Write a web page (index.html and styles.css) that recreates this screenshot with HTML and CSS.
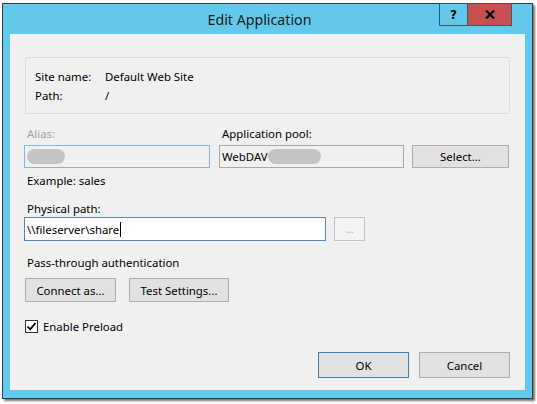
FILE: index.html
```html
<!DOCTYPE html>
<html>
<head>
<meta charset="utf-8">
<link rel="stylesheet" href="styles.css">
</head>
<body>
<div class="window">
  <div class="titlebar">
    <div class="title">Edit Application</div>
    <div class="controls">
      <div class="help">?</div>
      <div class="close">
        <svg width="10" height="9" viewBox="0 0 10 9"><path d="M1 0.5 L9 8.5 M9 0.5 L1 8.5" stroke="#000" stroke-width="2.2"/></svg>
      </div>
    </div>
  </div>
  <div class="client">
    <div class="sitebox">
      <div class="siterow"><span class="k">Site name:</span><span class="v">Default Web Site</span></div>
      <div class="siterow"><span class="k">Path:</span><span class="v">/</span></div>
    </div>

    <div class="row labels">
      <div class="lbl disabled alias-col">Alias:</div>
      <div class="lbl pool-col">Application pool:</div>
    </div>
    <div class="row inputs">
      <div class="input alias"><span class="blob b1"></span></div>
      <div class="input pool"><span class="txt">WebDAV</span><span class="blob b2"></span></div>
      <div class="btn select">Select...</div>
    </div>
    <div class="example">Example: sales</div>

    <div class="lbl phys-lbl">Physical path:</div>
    <div class="row inputs2">
      <div class="input phys"><span class="txt">\\fileserver\share</span><span class="caret"></span></div>
      <div class="btn dots">...</div>
    </div>

    <div class="lbl pass-lbl">Pass-through authentication</div>
    <div class="row btns">
      <div class="btn connect">Connect as...</div>
      <div class="btn test">Test Settings...</div>
    </div>

    <div class="row check">
      <span class="box"><svg width="11" height="11" viewBox="0 0 11 11"><path d="M1.5 5.5 L4.2 8.3 L9.5 2" fill="none" stroke="#000" stroke-width="1.8"/></svg></span>
      <span class="check-lbl">Enable Preload</span>
    </div>

    <div class="row footer">
      <div class="btn ok">OK</div>
      <div class="btn cancel">Cancel</div>
    </div>
  </div>
</div>
</body>
</html>
```
FILE: styles.css
```css
html, body {
  margin: 0;
  padding: 0;
  background: #ffffff;
}
body {
  width: 537px;
  height: 404px;
  overflow: hidden;
  font-family: "Noto Sans", "Open Sans", sans-serif;
  font-size: 11.4px;
  color: #000;
}
.window {
  margin: 3px 0 0 2px;
  width: 515px;
  border: 1px solid #3a3a3a;
  background: #62c9ec;
  padding: 0 7px 8px 7px;
  box-shadow: 2px 2px 2px rgba(0,0,0,0.55);
}
.titlebar {
  height: 30px;
  position: relative;
  display: flex;
  align-items: center;
  justify-content: center;
}
.title {
  font-size: 14.2px;
  color: #1a1a1a;
  padding-right: 16px;
}
.controls {
  position: absolute;
  top: -1px;
  right: 13px;
  display: flex;
  height: 22px;
}
.help {
  width: 27px;
  height: 21px;
  border: 1px solid #3c5a66;
  border-right: none;
  background: #62c9ec;
  font-family: "DejaVu Sans", sans-serif;
  font-weight: bold;
  font-size: 12px;
  display: flex;
  align-items: center;
  justify-content: center;
}
.close {
  width: 43px;
  height: 21px;
  border: 1px solid #3c5a66;
  background: #c75050;
  display: flex;
  align-items: center;
  justify-content: center;
}
.client {
  background: #f0f0f0;
  height: 356px;
  padding: 0 15px 0 14px;
  box-sizing: border-box;
  display: flex;
  flex-direction: column;
}
.sitebox {
  margin: 23px 0 0 1px;
  height: 57px;
  box-sizing: border-box;
  border: 1px solid #dcdcdc;
  border-radius: 3px;
  padding: 9px 0 0 9px;
}
.siterow {
  display: flex;
  height: 19px;
  align-items: center;
}
.siterow .k { width: 70px; }
.row { display: flex; }
.lbl { height: 16px; line-height: 16px; padding-left: 3px; }
.labels { margin-top: 12px; }
.alias-col { width: 192px; }
.disabled { color: #a2a2a2; }
.inputs { margin-top: 3px; height: 23px; }
.input {
  box-sizing: border-box;
  height: 100%;
  border: 1px solid #acacac;
  background: #fff;
  display: flex;
  align-items: center;
  padding-left: 2px;
}
.alias {
  width: 186px;
  border-color: #82b6e4;
  background: #f0f0f0;
}
.pool {
  width: 185px;
  margin-left: 9px;
  background: #f0f0f0;
  border-color: #a8a8a8;
}
.blob {
  display: inline-block;
  height: 15px;
  border-radius: 8px;
  background: #c4c4c4;
  filter: blur(0.6px);
}
.b1 { width: 38px; }
.b2 { width: 53px; }
.btn {
  box-sizing: border-box;
  height: 100%;
  border: 1px solid #adadad;
  background: #e1e1e1;
  display: flex;
  align-items: center;
  justify-content: center;
}
.select { width: 97px; margin-left: 8px; }
.example { margin-top: 5px; padding-left: 3px; height: 16px; line-height: 16px; }
.phys-lbl { margin-top: 12px; }
.inputs2 { margin-top: 0; height: 24px; }
.phys {
  width: 302px;
  border-color: #5f87ad;
  background: #fff;
}
.caret {
  display: inline-block;
  width: 1px;
  height: 15px;
  background: #000;
  margin-left: 1px;
}
.dots {
  width: 31px;
  margin-left: 8px;
  border-color: #c2c2c2;
  background: #f4f4f4;
  color: #a6a6a6;
  font-size: 10px;
}
.pass-lbl { margin-top: 14px; }
.btns { margin-top: 7px; height: 24px; padding-left: 1px; }
.connect { width: 91px; }
.test { width: 100px; margin-left: 13px; }
.check {
  margin-top: 16px;
  height: 16px;
  align-items: center;
  padding-left: 1px;
}
.box {
  box-sizing: border-box;
  width: 13px;
  height: 13px;
  border: 1px solid #333;
  background: #fff;
  display: flex;
  align-items: center;
  justify-content: center;
}
.check-lbl { margin-left: 5px; }
.footer {
  margin-top: 18px;
  height: 26px;
  justify-content: flex-end;
}
.ok { width: 91px; border-color: #3c7fb1; }
.cancel { width: 91px; margin-left: 10px; }
```
